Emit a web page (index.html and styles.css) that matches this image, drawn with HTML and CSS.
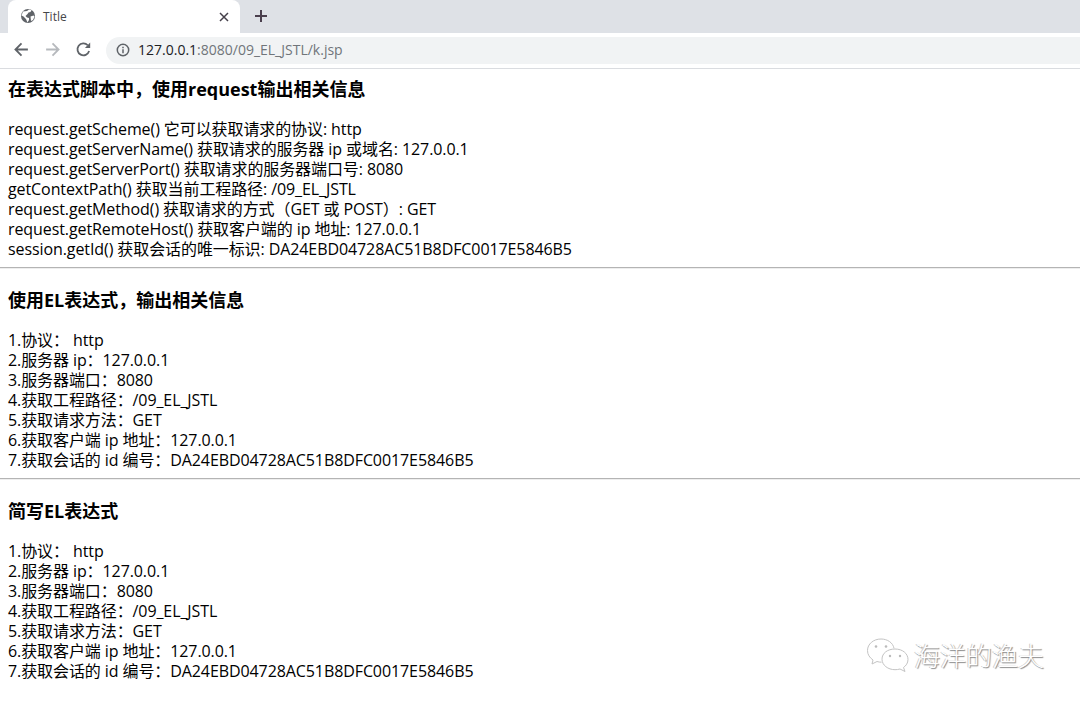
FILE: index.html
```html
<!DOCTYPE html>
<html lang="zh-CN">
<head>
<meta charset="utf-8">
<title>Title</title>
<link rel="stylesheet" href="styles.css">
</head>
<body>
<header class="browser">
  <div class="tabstrip">
    <div class="tab">
      <svg class="favicon" viewBox="0 0 16 16"><circle cx="8" cy="8" r="7" fill="#5f6368"/><path d="M3 3.500 7 3l2-1.500 2.500.5-1 2-2 .5-1 1.500L5.500 8 7 9.500l2 .5v2l-1.500 2.500L6 11 3.500 8.500 1.500 7.500Z M10.500 8.500l3-1 1 1-1.500 3.500-2 1Z" fill="#fff"/></svg>
      <span class="tab-title">Title</span>
      <svg class="tab-close" viewBox="0 0 10 10"><path d="M1 1l8 8M9 1l-8 8" stroke="#45404a" stroke-width="1.500" fill="none"/></svg>
    </div>
    <svg class="newtab" viewBox="0 0 14 14"><path d="M7 1v12M1 7h12" stroke="#4a3f4d" stroke-width="2" fill="none"/></svg>
  </div>
  <div class="toolbar">
    <svg class="navicon" viewBox="0 0 16 16"><path d="M14 8H2.500M8 2.300 2.300 8 8 13.700" stroke="#5f6368" stroke-width="1.700" fill="none"/></svg>
    <svg class="navicon" viewBox="0 0 16 16"><path d="M2 8h11.500M8 2.300 13.700 8 8 13.700" stroke="#b6b9bd" stroke-width="1.700" fill="none"/></svg>
    <svg class="navicon" viewBox="0 0 16 16"><path d="M13.300 9.500A5.600 5.600 0 1 1 12 4" stroke="#5f6368" stroke-width="1.700" fill="none"/><path d="M14.300 1.500v5h-5Z" fill="#5f6368"/></svg>
    <div class="omnibox">
      <svg class="info" viewBox="0 0 14 14"><circle cx="7" cy="7" r="5.700" stroke="#5f6368" stroke-width="1.500" fill="none"/><path d="M7 6.200v4M7 3.700v1.500" stroke="#5f6368" stroke-width="1.500"/></svg>
      <span class="url"><span class="host">127.0.0.1</span>:8080/09_EL_JSTL/k.jsp</span>
    </div>
  </div>
</header>
<main class="page">
  <section>
    <h3 class="first">在表达式脚本中，使用request输出相关信息</h3>
    <p>request.getScheme() 它可以获取请求的协议: http</p>
    <p>request.getServerName() 获取请求的服务器 ip 或域名: 127.0.0.1</p>
    <p>request.getServerPort() 获取请求的服务器端口号: 8080</p>
    <p>getContextPath() 获取当前工程路径: /09_EL_JSTL</p>
    <p>request.getMethod() 获取请求的方式（GET 或 POST）: GET</p>
    <p>request.getRemoteHost() 获取客户端的 ip 地址: 127.0.0.1</p>
    <p>session.getId() 获取会话的唯一标识: DA24EBD04728AC51B8DFC0017E5846B5</p>
  </section>
  <hr>
  <section>
    <h3>使用EL表达式，输出相关信息</h3>
    <p>1.协议： http</p>
    <p>2.服务器 ip：127.0.0.1</p>
    <p>3.服务器端口：8080</p>
    <p>4.获取工程路径：/09_EL_JSTL</p>
    <p>5.获取请求方法：GET</p>
    <p>6.获取客户端 ip 地址：127.0.0.1</p>
    <p>7.获取会话的 id 编号：DA24EBD04728AC51B8DFC0017E5846B5</p>
  </section>
  <hr>
  <section>
    <h3>简写EL表达式</h3>
    <p>1.协议： http</p>
    <p>2.服务器 ip：127.0.0.1</p>
    <p>3.服务器端口：8080</p>
    <p>4.获取工程路径：/09_EL_JSTL</p>
    <p>5.获取请求方法：GET</p>
    <p>6.获取客户端 ip 地址：127.0.0.1</p>
    <p>7.获取会话的 id 编号：DA24EBD04728AC51B8DFC0017E5846B5</p>
  </section>
</main>
<div class="watermark">
  <svg class="wechat" viewBox="0 0 44 36"><path d="M15 1C7.500 1 1.500 6 1.500 12.500c0 4 2 7 5.500 9.500l-1 4 5-2.500c1.500.5 3 .7 4.500.7" fill="#fff" stroke="#c4c4c4" stroke-width="1"/><path d="M15 1c6.500 0 12 3.800 13 9.300" fill="none" stroke="#c4c4c4" stroke-width="1"/><circle cx="10" cy="8.500" r="1.300" fill="#bbb"/><circle cx="20" cy="8.500" r="1.300" fill="#bbb"/><path d="M29 11c7.500 0 13 4.500 13 10.500 0 3.500-2 6.300-4.500 8l1.500 4-5-2.500c-1.500.5-3.300.7-5 .7-7 0-13-4.500-13-10.500S21.500 11 29 11Z" fill="#fff" stroke="#c4c4c4" stroke-width="1"/><circle cx="24" cy="18" r="1.200" fill="#bbb"/><circle cx="34" cy="18" r="1.200" fill="#bbb"/></svg>
  <span class="mark-text">海洋的渔夫</span>
</div>
</body>
</html>
```
FILE: styles.css
```css
* { box-sizing: border-box; }
html, body { margin: 0; padding: 0; background: #fff; }
body {
  width: 1080px;
  height: 705px;
  overflow: hidden;
  position: relative;
  font-family: "Open Sans", "Noto Sans CJK SC", sans-serif;
  color: #000;
}
.browser { height: 69px; border-bottom: 1px solid #dadce0; }
.tabstrip {
  height: 33px;
  background: #dee1e6;
  display: flex;
  align-items: flex-end;
  padding-left: 8px;
}
.tab {
  width: 232px;
  height: 33px;
  background: #fff;
  border-radius: 8px 8px 0 0;
  display: flex;
  align-items: center;
  padding: 0 11px 0 12px;
  font-size: 12px;
  color: #45474a;
}
.favicon { width: 16px; height: 16px; flex: none; margin-top: -1px; }
.tab-title { margin-left: 7px; flex: 1; }
.tab-close { width: 10px; height: 10px; flex: none; }
.newtab { width: 14px; height: 14px; margin: 0 0 10px 14px; }
.toolbar {
  height: 35px;
  display: flex;
  align-items: center;
  padding: 0 0 2px 13px;
  gap: 14px;
}
.navicon { width: 17px; height: 17px; flex: none; }
.omnibox {
  flex: 1;
  height: 27px;
  margin-top: 2px;
  background: #f1f3f4;
  border-radius: 14px 0 0 14px;
  display: flex;
  align-items: center;
  padding: 0 0 2px 10px;
  font-size: 14px;
  color: #70757a;
}
.info { width: 14px; height: 14px; flex: none; }
.url { margin-left: 8px; }
.host { color: #202124; }
.page { padding: 8px 0 0 8px; }
h3 {
  margin: 19px 0 17px;
  font-size: 18px;
  line-height: 25px;
  font-weight: 700;
}
h3.first { margin-top: 0; }
p {
  margin: 0;
  font-size: 16px;
  line-height: 20px;
  letter-spacing: -0.09px;
  white-space: pre-wrap;
}
hr {
  height: 2px;
  margin: 8px 0 8px -8px;
  border: 0;
  border-top: 1px solid #b4b4b4;
  border-bottom: 1px solid #eee;
}
.watermark {
  position: absolute;
  left: 866px;
  top: 638px;
  display: flex;
  align-items: center;
  gap: 4px;
}
.wechat { width: 44px; height: 36px; flex: none; }
.mark-text {
  font-size: 26px;
  line-height: 36px;
  font-weight: 300;
  color: #fff;
  text-shadow: 1px 1px 1px #888, -1px 0 0 #ccc;
}
```
